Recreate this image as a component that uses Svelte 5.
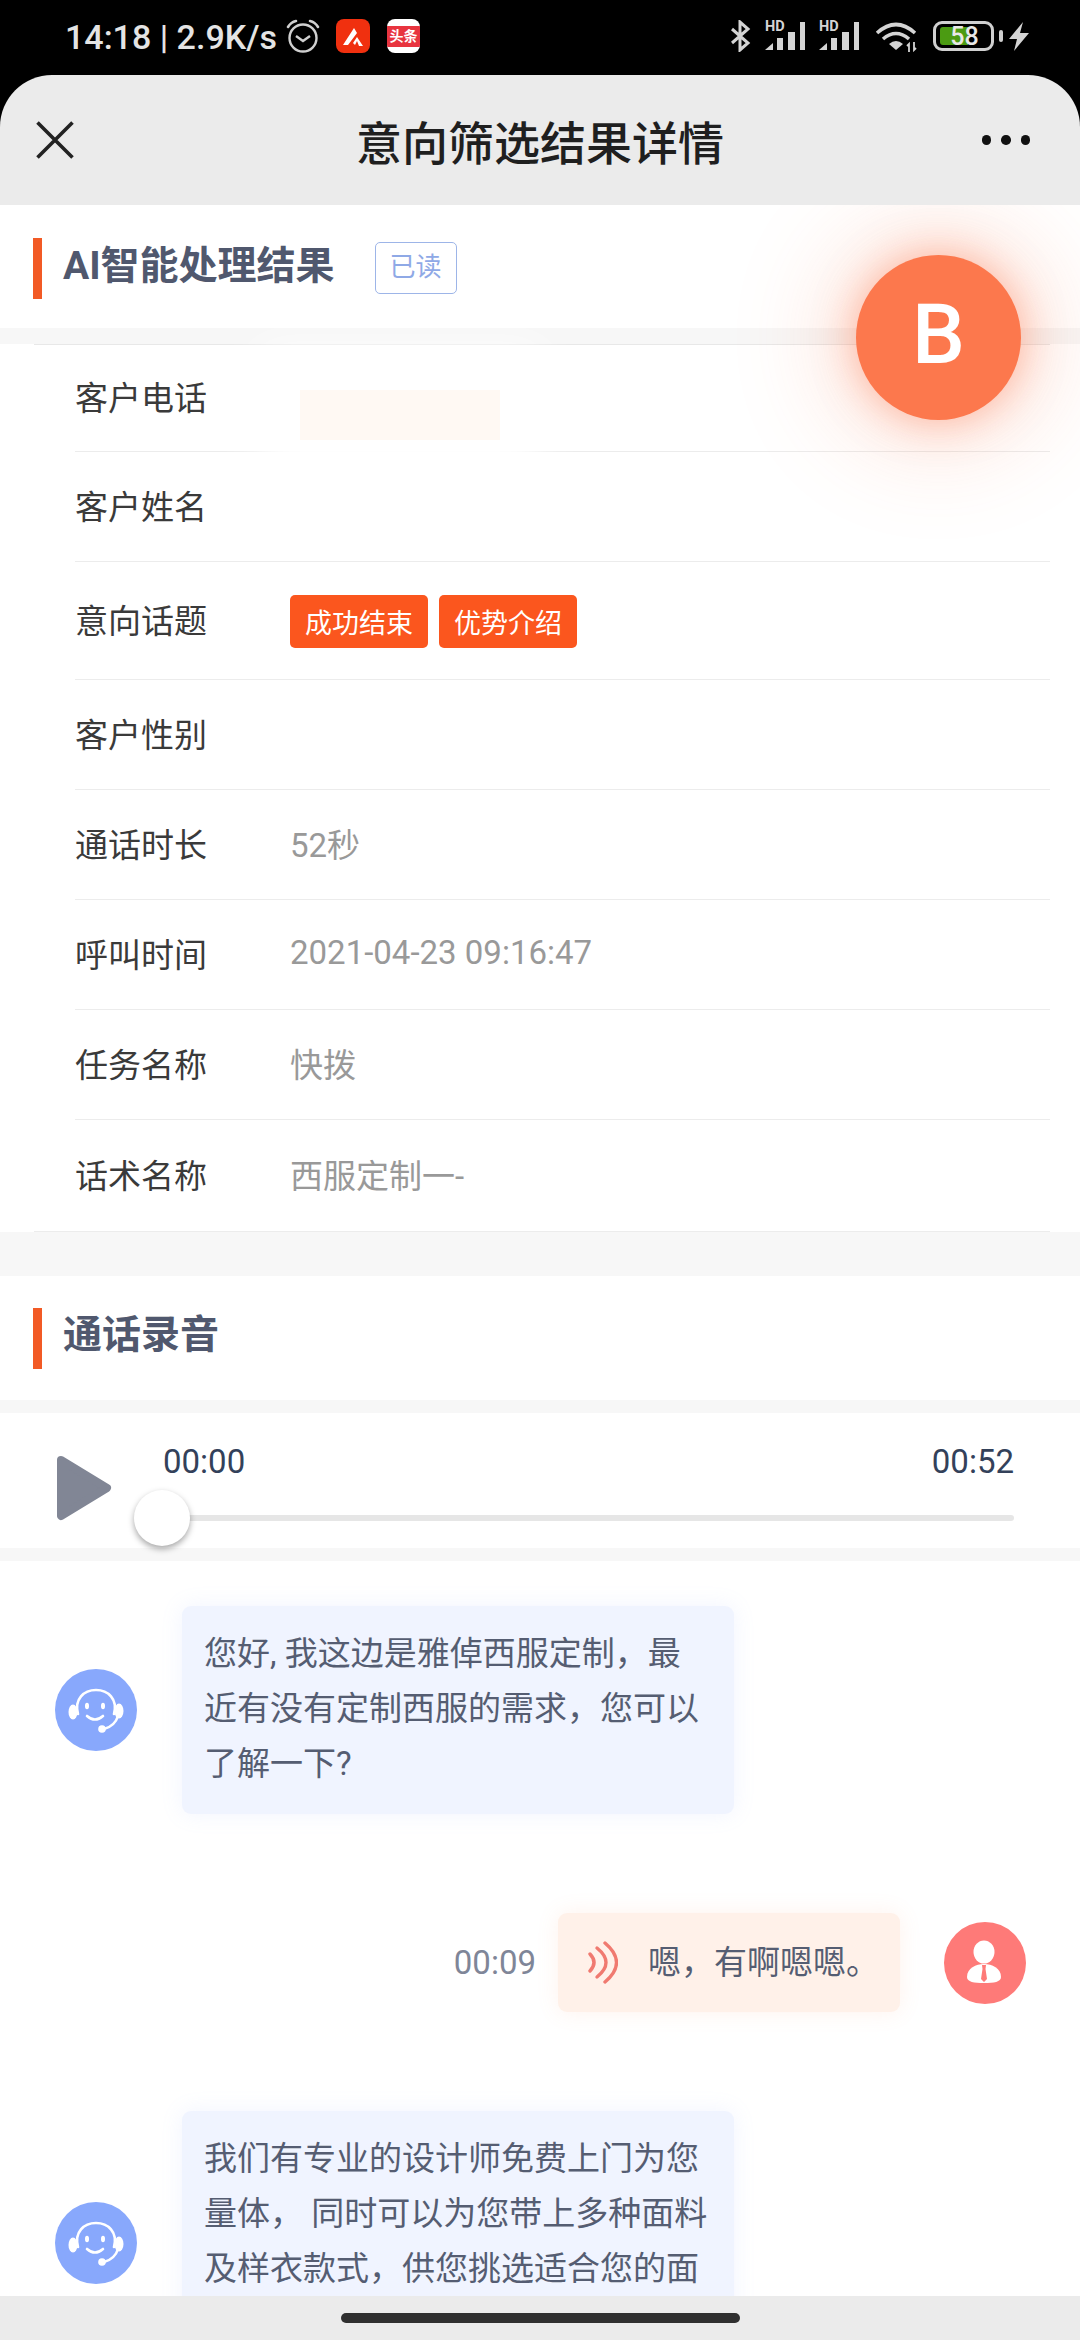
<script>
	// call result detail page: fields first, then the recording transcript
	const fields = [
		{ label: '客户电话', value: '' },
		{ label: '客户姓名', value: '' },
		{ label: '意向话题', tags: ['成功结束', '优势介绍'] },
		{ label: '客户性别', value: '' },
		{ label: '通话时长', value: '52秒' },
		{ label: '呼叫时间', value: '2021-04-23 09:16:47' },
		{ label: '任务名称', value: '快拨' },
		{ label: '话术名称', value: '西服定制一-' }
	];
</script>

{#snippet agent()}
	<svg class="avatar" viewBox="0 0 82 82" aria-hidden="true">
		<circle cx="41" cy="41" r="41" fill="#88a8fc" />
		<g fill="none" stroke="#fff" stroke-width="2.6" stroke-linecap="round">
			<path d="M23 45C19 30 29 21 41 21C53 21 63 30 59 45" />
			<path d="M32 47Q40 54 48 47" />
			<path d="M63 47Q60 57 49 60" />
		</g>
		<g fill="#fff">
			<ellipse cx="18" cy="43" rx="4.5" ry="7.5" />
			<ellipse cx="64" cy="42" rx="4.5" ry="7.5" />
			<ellipse cx="32" cy="37" rx="2" ry="3.2" />
			<ellipse cx="48" cy="37" rx="2" ry="3.2" />
			<circle cx="47" cy="60" r="3.8" />
		</g>
	</svg>
{/snippet}

{#snippet signal()}
	<div class="signal">
		<span class="hd">HD</span>
		<svg width="40" height="30" viewBox="0 0 40 30" aria-hidden="true">
			<path d="M0 29L8 22V29Z" fill="#d4d4d4" />
			<rect x="12" y="17" width="6" height="12" fill="#d4d4d4" />
			<rect x="23" y="11" width="7" height="18" fill="#d4d4d4" />
			<rect x="35" y="1" width="5" height="28" fill="#d4d4d4" />
		</svg>
	</div>
{/snippet}

<div class="app">
	<header class="top">
		<div class="status">
			<span class="clock">14:18 | 2.9K/s</span>
			<svg class="alarm" width="34" height="34" viewBox="0 0 34 34" aria-hidden="true">
				<circle cx="17" cy="19" r="13.5" fill="none" stroke="#d0d0d0" stroke-width="2.4" />
				<path d="M10 19L17 24L24 19" transform="translate(0 -2)" fill="none" stroke="#d0d0d0" stroke-width="2.4" />
				<path d="M2 8Q5 3 10 2M24 2Q29 3 32 8" fill="none" stroke="#d0d0d0" stroke-width="2.6" stroke-linecap="round" />
			</svg>
			<svg class="app-icon" width="34" height="34" viewBox="0 0 34 34" aria-hidden="true">
				<rect width="34" height="34" rx="8" fill="#f0300f" />
				<path d="M7 26L18 9L21 14L12 26ZM17 24L21 18L27 27L23 27L21 22L19 26Z" fill="#fff" />
			</svg>
			<div class="toutiao"><span>头条</span></div>
			<div class="status-right">
				<svg width="21" height="32" viewBox="0 0 21 32" aria-hidden="true">
					<path d="M2 9L18 23L10 30V2L18 9L2 23" fill="none" stroke="#d4d4d4" stroke-width="3" />
				</svg>
				{@render signal()}
				{@render signal()}
				<svg class="wifi" width="44" height="32" viewBox="0 0 44 32" aria-hidden="true">
					<g fill="none" stroke="#d4d4d4" stroke-width="3.6">
						<path d="M2 13Q21 -4 40 13" />
						<path d="M8 19Q21 8 34 19" />
					</g>
					<path d="M14 24Q21 18 28 24L21 30Z" fill="#d4d4d4" />
					<path d="M34 32V24L32 26M39 22V30L41 28" fill="none" stroke="#d4d4d4" stroke-width="1.8" />
				</svg>
				<div class="battery">
					<div class="battery-fill"></div>
					<span>58</span>
				</div>
				<div class="nub"></div>
				<svg width="20" height="29" viewBox="0 0 20 29" aria-hidden="true">
					<path d="M14 0L0 17H8L5 29L20 11H11Z" fill="#d4d4d4" />
				</svg>
			</div>
		</div>
		<nav class="nav">
			<svg class="close" width="38" height="38" viewBox="0 0 38 38" aria-hidden="true">
				<path d="M1.5 1.5L36.5 36.5M36.5 1.5L1.5 36.5" stroke="#222" stroke-width="3.6" />
			</svg>
			<h1>意向筛选结果详情</h1>
			<div class="dots"><i></i><i></i><i></i></div>
		</nav>
	</header>

	<section class="head first">
		<b class="mark"></b>
		<h2>AI智能处理结果</h2>
		<span class="read">已读</span>
	</section>
	<div class="band b16"></div>

	<div class="fields">
		{#each fields as f}
			<div class="row">
				<span class="label">{f.label}</span>
				{#if f.tags}
					<div class="tags">
						{#each f.tags as t}<span class="tag">{t}</span>{/each}
					</div>
				{:else}
					<span class="value">{f.value}</span>
				{/if}
			</div>
		{/each}
	</div>
	<div class="band b44"></div>

	<section class="head">
		<b class="mark"></b>
		<h2>通话录音</h2>
	</section>
	<div class="band b13"></div>

	<div class="player">
		<svg class="play" width="58" height="68" viewBox="0 0 58 68" aria-hidden="true">
			<path d="M6 6L52 34L6 62Z" fill="#818695" stroke="#818695" stroke-width="8" stroke-linejoin="round" />
		</svg>
		<div class="progress">
			<div class="times"><span>00:00</span><span>00:52</span></div>
			<div class="track"><div class="thumb"></div></div>
		</div>
	</div>
	<div class="band b13"></div>

	<div class="chat">
		<div class="msg">
			{@render agent()}
			<p class="bubble blue">您好, 我这边是雅倬西服定制，最近有没有定制西服的需求，您可以了解一下?</p>
		</div>
		<div class="msg right">
			<span class="time">00:09</span>
			<div class="bubble peach">
				<svg width="30" height="44" viewBox="0 0 30 44" aria-hidden="true">
					<g fill="none" stroke="#f07a70" stroke-width="3.4" stroke-linecap="round">
						<path d="M2 13Q10 21.5 2 30" />
						<path d="M9 7Q27 21.5 9 36" />
						<path d="M17 2Q40 21.5 17 41" />
					</g>
				</svg>
				<span>嗯，有啊嗯嗯。</span>
			</div>
			<svg class="avatar" viewBox="0 0 82 82" aria-hidden="true">
				<circle cx="41" cy="41" r="41" fill="#fe7a78" />
				<ellipse cx="40" cy="30" rx="10.5" ry="11.5" fill="#fff" />
				<path d="M23 55C23 46 32 42 40 42C48 42 57 46 57 55C57 60 50 61 40 61C30 61 23 60 23 55Z" fill="#fff" />
				<path d="M38 43H42L41.5 47L43 57L40 60L37 57L38.5 47Z" fill="#fe7a78" />
			</svg>
		</div>
		<div class="msg">
			{@render agent()}
			<p class="bubble blue tall">我们有专业的设计师免费上门为您量体， 同时可以为您带上多种面料及样衣款式，供您挑选适合您的面</p>
		</div>
	</div>

	<div class="bottom"><div class="home"></div></div>

	<div class="redacted"></div>
	<div class="fab">B</div>
</div>

<style>
	:global(body) {
		margin: 0;
		background: #fff;
	}

	.app {
		position: relative;
		width: 1080px;
		height: 2340px;
		display: flex;
		flex-direction: column;
		overflow: hidden;
		font-family: Roboto, "Noto Sans CJK SC", sans-serif;
		background: #fff;
	}

	.top {
		position: relative;
		z-index: 3;
		flex: none;
		background: #000;
	}

	.status {
		height: 75px;
		display: flex;
		align-items: center;
		padding: 0 51px 0 65px;
		box-sizing: border-box;
		color: #e4e4e4;
	}

	.clock {
		font-size: 34px;
		font-weight: 500;
		white-space: nowrap;
		margin-top: -2px;
	}

	.alarm {
		margin-left: 9px;
		margin-top: -3px;
	}

	.app-icon {
		margin-left: 16px;
		margin-top: -3px;
	}

	.toutiao {
		width: 33px;
		height: 34px;
		margin-left: 17px;
		margin-top: -3px;
		border-radius: 8px;
		background: #fff;
		display: flex;
		align-items: center;
		overflow: hidden;
	}

	.toutiao span {
		width: 100%;
		height: 21px;
		background: #e8343f;
		color: #fff;
		font-size: 14px;
		font-weight: 700;
		line-height: 21px;
		text-align: center;
		white-space: nowrap;
	}

	.status-right {
		margin-left: auto;
		display: flex;
		align-items: center;
		gap: 14px;
		margin-top: -3px;
	}

	.signal {
		position: relative;
		display: flex;
	}

	.hd {
		position: absolute;
		left: 0;
		top: 0;
		color: #d4d4d4;
		font-size: 14.5px;
		font-weight: 700;
		line-height: 11px;
	}

	.wifi {
		margin-left: 2px;
	}

	.battery {
		position: relative;
		width: 61px;
		height: 30px;
		box-sizing: border-box;
		border: 3px solid #d0d0d0;
		border-radius: 9px;
		display: flex;
		align-items: center;
		justify-content: center;
	}

	.battery-fill {
		position: absolute;
		left: 4px;
		top: 3px;
		bottom: 3px;
		width: 28px;
		background: #4b9b12;
		border-radius: 3px 0 0 3px;
	}

	.battery span {
		position: relative;
		color: #e8e8e8;
		font-size: 25px;
		font-weight: 500;
		line-height: 1;
		margin-left: 2px;
	}

	.nub {
		width: 4px;
		height: 12px;
		margin: 0 -8px 0 -9px;
		border-radius: 2px;
		background: #d0d0d0;
	}

	.nav {
		height: 130px;
		background: #ebebeb;
		border-radius: 52px 52px 0 0;
		display: grid;
		grid-template-columns: 150px 1fr 150px;
		align-items: center;
	}

	.close {
		margin-left: 36px;
	}

	.nav h1 {
		margin: 0;
		text-align: center;
		font-size: 46px;
		font-weight: 500;
		color: #1f1f1f;
	}

	.dots {
		display: flex;
		justify-content: flex-end;
		gap: 10px;
		padding-right: 50px;
	}

	.dots i {
		width: 9.5px;
		height: 9.5px;
		border-radius: 50%;
		background: #111;
	}

	.head {
		height: 124px;
		flex: none;
		display: flex;
		align-items: center;
		padding-left: 33px;
		box-sizing: border-box;
	}

	.head.first {
		height: 123px;
		padding-top: 3px;
	}

	.mark {
		width: 8.5px;
		height: 61px;
		background: #f25a25;
	}

	.head h2 {
		margin: 0 0 14px 21.5px;
		font-size: 39px;
		font-weight: 700;
		color: #50586e;
	}

	.head.first h2 {
		margin-bottom: 12px;
	}

	.read {
		margin-left: 40px;
		width: 82px;
		height: 52px;
		box-sizing: border-box;
		border: 1.5px solid #9db5e8;
		border-radius: 5px;
		color: #8fa9e6;
		font-size: 26px;
		line-height: 49px;
		text-align: center;
	}

	.band {
		flex: none;
		background: #f7f7f7;
	}

	.b13 { height: 13px; }
	.b16 { height: 16px; }
	.b44 { height: 44px; }

	.fields {
		flex: none;
		margin: 0 30px 0 34px;
		border-top: 1px solid #e8e8e8;
	}

	.row {
		min-height: 109px;
		margin-left: 41px;
		display: flex;
		align-items: center;
		border-bottom: 1px solid #ececec;
		font-size: 33px;
	}

	.row:first-child {
		min-height: 106px;
	}

	.row:last-child {
		margin-left: 0;
		padding-left: 41px;
		min-height: 111px;
	}

	.label {
		width: 215px;
		padding-bottom: 4px;
		color: #3a3a3a;
	}

	.value {
		padding-bottom: 4px;
		color: #999;
	}

	.tags {
		display: flex;
		gap: 11px;
		padding: 33px 0 31px;
	}

	.tag {
		height: 53px;
		padding: 0 15px;
		border-radius: 5px;
		background: #fb561e;
		color: #fff;
		font-size: 27px;
		line-height: 58px;
		white-space: nowrap;
	}

	.player {
		height: 135px;
		flex: none;
		box-sizing: border-box;
		display: flex;
		align-items: flex-start;
		padding: 31px 66px 0 55px;
	}

	.play {
		flex: none;
		margin-top: 10px;
		margin-right: 50px;
	}

	.progress {
		flex: 1;
	}

	.times {
		display: flex;
		justify-content: space-between;
		font-size: 33px;
		line-height: 36px;
		color: #33415a;
	}

	.track {
		position: relative;
		height: 6px;
		margin-top: 35px;
		border-radius: 3px;
		background: #e6e6e6;
	}

	.thumb {
		position: absolute;
		left: -29px;
		top: -25px;
		width: 56px;
		height: 56px;
		border-radius: 50%;
		background: #fff;
		box-shadow: 0 3px 6px rgba(0, 0, 0, 0.35);
	}

	.chat {
		flex: 1;
		min-height: 0;
		overflow: hidden;
		display: flex;
		flex-direction: column;
		gap: 99px;
		padding-top: 45px;
	}

	.msg {
		display: flex;
		align-items: center;
		flex: none;
		padding-left: 55px;
	}

	.msg.right {
		justify-content: flex-end;
		padding: 0 54px 0 0;
	}

	.avatar {
		flex: none;
		width: 82px;
		height: 82px;
	}

	.bubble {
		margin: 0;
		box-sizing: border-box;
		border-radius: 9px;
		font-size: 33px;
		line-height: 55px;
		color: #555d72;
	}

	.blue {
		width: 552px;
		margin-left: 45px;
		padding: 20px 23px 23px 22px;
		background: #f0f4ff;
		box-shadow: 0 0 22px rgba(136, 168, 252, 0.12);
	}

	.tall {
		min-height: 263px;
	}

	.time {
		font-size: 33px;
		color: #7f8698;
		margin-right: 22px;
	}

	.peach {
		display: flex;
		align-items: center;
		gap: 30px;
		padding: 22px 21px 22px 30px;
		margin-right: 44px;
		background: #fff1e9;
		box-shadow: 0 0 22px rgba(252, 150, 100, 0.12);
	}

	.bottom {
		position: relative;
		z-index: 2;
		flex: none;
		height: 44px;
		background: #ebebeb;
		display: flex;
		align-items: center;
		justify-content: center;
	}

	.home {
		width: 399px;
		height: 10px;
		border-radius: 5px;
		background: #2f2f2f;
	}

	/* blanked-out phone number, with its white halo */
	.redacted {
		position: absolute;
		left: 300px;
		top: 390px;
		width: 200px;
		height: 50px;
		background: #fff9f3;
		box-shadow: 0 0 40px 40px #fff;
	}

	.fab {
		position: absolute;
		left: 856px;
		top: 255px;
		width: 165px;
		height: 165px;
		border-radius: 50%;
		background: #fc784d;
		color: #fff;
		font-size: 84px;
		font-weight: 500;
		line-height: 160px;
		text-align: center;
		box-shadow: 0 0 40px rgba(252, 120, 77, 0.5), 0 0 100px 30px rgba(252, 120, 77, 0.2);
	}
</style>
